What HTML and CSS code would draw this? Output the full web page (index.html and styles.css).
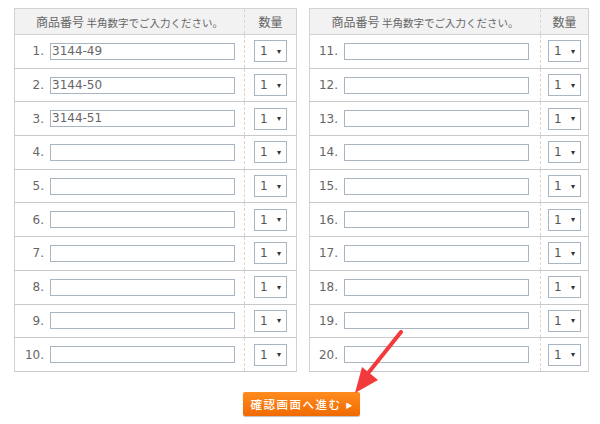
FILE: index.html
```html
<!DOCTYPE html>
<html lang="ja">
<head>
<meta charset="utf-8">
<link rel="stylesheet" href="styles.css">
</head>
<body>
<div class="page">
  <div class="tables">
    <table class="order left">
      <thead><tr><th class="c-code">商品番号 <small>半角数字でご入力ください。</small></th><th class="c-qty">数量</th></tr></thead>
      <tbody>
        <tr><td class="c-code"><span class="num">1.</span><span class="inp">3144-49</span></td><td class="c-qty"><span class="sel">1<i>▾</i></span></td></tr>
        <tr><td class="c-code"><span class="num">2.</span><span class="inp">3144-50</span></td><td class="c-qty"><span class="sel">1<i>▾</i></span></td></tr>
        <tr><td class="c-code"><span class="num">3.</span><span class="inp">3144-51</span></td><td class="c-qty"><span class="sel">1<i>▾</i></span></td></tr>
        <tr><td class="c-code"><span class="num">4.</span><span class="inp"></span></td><td class="c-qty"><span class="sel">1<i>▾</i></span></td></tr>
        <tr><td class="c-code"><span class="num">5.</span><span class="inp"></span></td><td class="c-qty"><span class="sel">1<i>▾</i></span></td></tr>
        <tr><td class="c-code"><span class="num">6.</span><span class="inp"></span></td><td class="c-qty"><span class="sel">1<i>▾</i></span></td></tr>
        <tr><td class="c-code"><span class="num">7.</span><span class="inp"></span></td><td class="c-qty"><span class="sel">1<i>▾</i></span></td></tr>
        <tr><td class="c-code"><span class="num">8.</span><span class="inp"></span></td><td class="c-qty"><span class="sel">1<i>▾</i></span></td></tr>
        <tr><td class="c-code"><span class="num">9.</span><span class="inp"></span></td><td class="c-qty"><span class="sel">1<i>▾</i></span></td></tr>
        <tr><td class="c-code"><span class="num">10.</span><span class="inp"></span></td><td class="c-qty"><span class="sel">1<i>▾</i></span></td></tr>
      </tbody>
    </table>
    <table class="order right">
      <thead><tr><th class="c-code">商品番号 <small>半角数字でご入力ください。</small></th><th class="c-qty">数量</th></tr></thead>
      <tbody>
        <tr><td class="c-code"><span class="num">11.</span><span class="inp"></span></td><td class="c-qty"><span class="sel">1<i>▾</i></span></td></tr>
        <tr><td class="c-code"><span class="num">12.</span><span class="inp"></span></td><td class="c-qty"><span class="sel">1<i>▾</i></span></td></tr>
        <tr><td class="c-code"><span class="num">13.</span><span class="inp"></span></td><td class="c-qty"><span class="sel">1<i>▾</i></span></td></tr>
        <tr><td class="c-code"><span class="num">14.</span><span class="inp"></span></td><td class="c-qty"><span class="sel">1<i>▾</i></span></td></tr>
        <tr><td class="c-code"><span class="num">15.</span><span class="inp"></span></td><td class="c-qty"><span class="sel">1<i>▾</i></span></td></tr>
        <tr><td class="c-code"><span class="num">16.</span><span class="inp"></span></td><td class="c-qty"><span class="sel">1<i>▾</i></span></td></tr>
        <tr><td class="c-code"><span class="num">17.</span><span class="inp"></span></td><td class="c-qty"><span class="sel">1<i>▾</i></span></td></tr>
        <tr><td class="c-code"><span class="num">18.</span><span class="inp"></span></td><td class="c-qty"><span class="sel">1<i>▾</i></span></td></tr>
        <tr><td class="c-code"><span class="num">19.</span><span class="inp"></span></td><td class="c-qty"><span class="sel">1<i>▾</i></span></td></tr>
        <tr><td class="c-code"><span class="num">20.</span><span class="inp"></span></td><td class="c-qty"><span class="sel">1<i>▾</i></span></td></tr>
      </tbody>
    </table>
  </div>
  <div class="actions">
    <button class="next">確認画面へ進む <span class="tri">▶</span></button>
  </div>
  <svg class="arrow" width="70" height="70" viewBox="0 0 70 70">
    <path d="M52 2 L20 42" stroke="#f23a3c" stroke-width="4" stroke-linecap="round" fill="none"/>
    <polygon points="6,63 13,37 29,50" fill="#f23a3c"/>
  </svg>
</div>
</body>
</html>
```

FILE: styles.css
```css
html, body { margin: 0; padding: 0; background: #fff; }
body {
  font-family: "DejaVu Sans", "Noto Sans CJK JP", sans-serif;
  color: #666;
  width: 600px;
  height: 424px;
  overflow: hidden;
}
.page { position: relative; padding: 8px 0 0 14px; }
.tables { display: flex; gap: 12px; align-items: flex-start; }
table.order {
  border-collapse: collapse;
  table-layout: fixed;
  border: 1px solid #d2d2d2;
}
table.left { width: 283px; }
table.right { width: 280px; }
table.left .c-code { width: 229px; }
table.right .c-code { width: 230px; }
table.order th {
  background: #f2f2f2;
  height: 25px;
  padding: 0;
  font-family: "Noto Sans CJK JP", sans-serif;
  font-weight: normal;
  font-size: 12px;
  color: #666;
  border-bottom: 1px solid #d2d2d2;
}
table.order th small { font-size: 10.5px; }
table.order td {
  height: 32.7px;
  padding: 0;
  border-bottom: 1px solid #c9c9c9;
}
table.order .c-code { border-right: 1px dashed #e3cfcb; }
table.order td.c-code { font-size: 12px; }
.num {
  display: inline-block;
  width: 29px;
  text-align: right;
  margin-right: 6px;
  font-size: 12px;
  color: #666;
  vertical-align: middle;
}
table.right .num { width: 28px; }
.inp {
  display: inline-block;
  box-sizing: border-box;
  width: 185px;
  height: 17px;
  border: 1px solid #a9b6c2;
  vertical-align: middle;
  font-size: 12px;
  line-height: 15px;
  padding-left: 1px;
  color: #666;
}
td.c-qty { text-align: center; }
.sel {
  display: inline-flex;
  align-items: center;
  justify-content: space-between;
  box-sizing: border-box;
  width: 33px;
  height: 22px;
  border: 1px solid #a9b6c2;
  padding: 0 5px 0 5px;
  font-family: "DejaVu Sans", sans-serif;
  font-size: 12px;
  color: #555;
  vertical-align: middle;
}
.sel i { font-style: normal; font-size: 8px; color: #333; }
.actions { display: flex; padding: 20px 0 0 229px; }
.next {
  width: 117px;
  height: 24px;
  border: 0;
  border-radius: 2px;
  background: linear-gradient(#ff8c1f, #f06a02);
  box-shadow: 0 1px 1px rgba(0,0,0,0.25);
  color: #fff;
  font-family: "Noto Sans CJK JP", sans-serif;
  font-weight: 500;
  font-size: 11.5px;
  letter-spacing: 1.5px;
  padding: 0;
}
.next .tri { font-size: 7px; vertical-align: 1px; letter-spacing: 0; }
.arrow { position: absolute; left: 349px; top: 330px; }
```
